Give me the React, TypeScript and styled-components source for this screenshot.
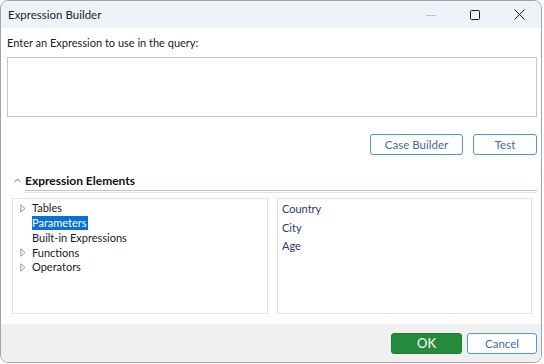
import React from 'react';
import styled, { createGlobalStyle } from 'styled-components';

const GlobalStyle = createGlobalStyle`
  body {
    margin: 0;
    background: #ffffff;
    font-family: Lato, "Open Sans", sans-serif;
  }
`;

const Window = styled.div`
  width: 542px;
  height: 363px;
  box-sizing: border-box;
  border: 1px solid #a4a4a4;
  border-radius: 8px;
  overflow: hidden;
  display: flex;
  flex-direction: column;
  background: #ffffff;
  font-size: 11px;
  color: #1a1a1a;
`;

const TitleBar = styled.div`
  height: 27px;
  background: #eef2f9;
  display: flex;
  align-items: center;
  padding-left: 7px;
`;

const Title = styled.div`
  flex: 1;
  font-size: 11.5px;
  color: #1f1f1f;
`;

const WinControl = styled.div`
  width: 44px;
  height: 27px;
  display: flex;
  align-items: center;
  justify-content: center;
`;

const Body = styled.div`
  flex: 1;
  display: flex;
  flex-direction: column;
  padding: 7px 4px 0 6px;
`;

const Prompt = styled.div`
  height: 16px;
  line-height: 16px;
  margin-bottom: 6px;
`;

const ExprInput = styled.div`
  height: 60px;
  box-sizing: border-box;
  border: 1px solid #c6c6c6;
`;

const ButtonRow = styled.div`
  display: flex;
  justify-content: flex-end;
  gap: 10px;
  margin-top: 17px;
`;

const Button = styled.button<{ $w: number; $primary?: boolean }>`
  width: ${p => p.$w}px;
  height: 21px;
  box-sizing: border-box;
  border-radius: 3px;
  border: 1px solid ${p => (p.$primary ? '#1f7a36' : '#4a9ad6')};
  background: ${p => (p.$primary ? '#268a3d' : '#ffffff')};
  color: ${p => (p.$primary ? '#ffffff' : '#3f6e9e')};
  font-family: Lato, "Open Sans", sans-serif;
  font-size: ${p => (p.$primary ? 13 : 11.5)}px;
  padding: 0;
  line-height: 19px;
`;

const SectionHeader = styled.div`
  display: flex;
  align-items: center;
  margin-top: 17px;
  padding-left: 7px;
  height: 16px;
`;

const Caret = styled.span`
  width: 11px;
  display: flex;
  align-items: center;
`;

const SectionTitle = styled.div`
  font-weight: 700;
  font-size: 12px;
  color: #111111;
`;

const SectionRule = styled.div`
  margin-left: 18px;
  margin-top: 2px;
  height: 1px;
  border-top: 1px solid #b6c8d8;
  border-bottom: 1px solid #dfe7ee;
`;

const Panels = styled.div`
  display: flex;
  gap: 9px;
  margin-top: 5px;
  padding-left: 5px;
`;

const Panel = styled.div<{ $w: number }>`
  width: ${p => p.$w}px;
  height: 116px;
  box-sizing: border-box;
  border: 1px solid #e2e2e2;
`;

const Tree = styled.div`
  padding: 2px 0 0 7px;
`;

const TreeRow = styled.div`
  display: flex;
  align-items: center;
  height: 14.75px;
`;

const Expander = styled.span`
  width: 12px;
  display: flex;
  align-items: center;
`;

const TreeLabel = styled.span<{ $selected?: boolean }>`
  background: ${p => (p.$selected ? '#0a70d4' : 'transparent')};
  color: ${p => (p.$selected ? '#ffffff' : '#1a1a1a')};
  line-height: 14px;
  padding: 0 1px 0 0;
`;

const List = styled.div`
  padding: 1px 0 0 4px;
`;

const ListItem = styled.div`
  height: 18.5px;
  line-height: 18px;
  color: #2c3b6b;
`;

const Footer = styled.div`
  height: 38px;
  background: #f0f0f0;
  margin-top: 10px;
  display: flex;
  justify-content: flex-end;
  align-items: center;
  gap: 5px;
  padding-right: 4px;
`;

const Triangle = () => (
  <svg width="6" height="9" viewBox="0 0 6 9">
    <path d="M0.8 0.8 L5 4.5 L0.8 8.2 Z" fill="none" stroke="#8a8a8a" strokeWidth="0.9" />
  </svg>
);

const treeItems = [
  { label: 'Tables', expandable: true },
  { label: 'Parameters', selected: true },
  { label: 'Built-in Expressions' },
  { label: 'Functions', expandable: true },
  { label: 'Operators', expandable: true },
];

const params = ['Country', 'City', 'Age'];

const App: React.FC = () => {
  return (
    <>
      <GlobalStyle />
      <Window>
        <TitleBar>
          <Title>Expression Builder</Title>
          <WinControl>
            <svg width="10" height="10" viewBox="0 0 10 10">
              <path d="M0 5.5 H10" stroke="#c4c4c4" strokeWidth="1" />
            </svg>
          </WinControl>
          <WinControl>
            <svg width="10" height="10" viewBox="0 0 10 10">
              <rect x="0.5" y="0.5" width="9" height="9" rx="1" fill="none" stroke="#1a1a1a" strokeWidth="1" />
            </svg>
          </WinControl>
          <WinControl>
            <svg width="11" height="11" viewBox="0 0 11 11">
              <path d="M0.5 0.5 L10.5 10.5 M10.5 0.5 L0.5 10.5" stroke="#1a1a1a" strokeWidth="1" />
            </svg>
          </WinControl>
        </TitleBar>
        <Body>
          <Prompt>Enter an Expression to use in the query:</Prompt>
          <ExprInput />
          <ButtonRow>
            <Button $w={93}>Case Builder</Button>
            <Button $w={64}>Test</Button>
          </ButtonRow>
          <SectionHeader>
            <Caret>
              <svg width="7" height="5" viewBox="0 0 7 5">
                <path d="M0.5 4.2 L3.5 1 L6.5 4.2" fill="none" stroke="#7a7a7a" strokeWidth="1" />
              </svg>
            </Caret>
            <SectionTitle>Expression Elements</SectionTitle>
          </SectionHeader>
          <SectionRule />
          <Panels>
            <Panel $w={256}>
              <Tree>
                {treeItems.map(item => (
                  <TreeRow key={item.label}>
                    <Expander>{item.expandable && <Triangle />}</Expander>
                    <TreeLabel $selected={item.selected}>{item.label}</TreeLabel>
                  </TreeRow>
                ))}
              </Tree>
            </Panel>
            <Panel $w={255}>
              <List>
                {params.map(p => (
                  <ListItem key={p}>{p}</ListItem>
                ))}
              </List>
            </Panel>
          </Panels>
        </Body>
        <Footer>
          <Button $w={71} $primary>OK</Button>
          <Button $w={70}>Cancel</Button>
        </Footer>
      </Window>
    </>
  );
};

export default App;
